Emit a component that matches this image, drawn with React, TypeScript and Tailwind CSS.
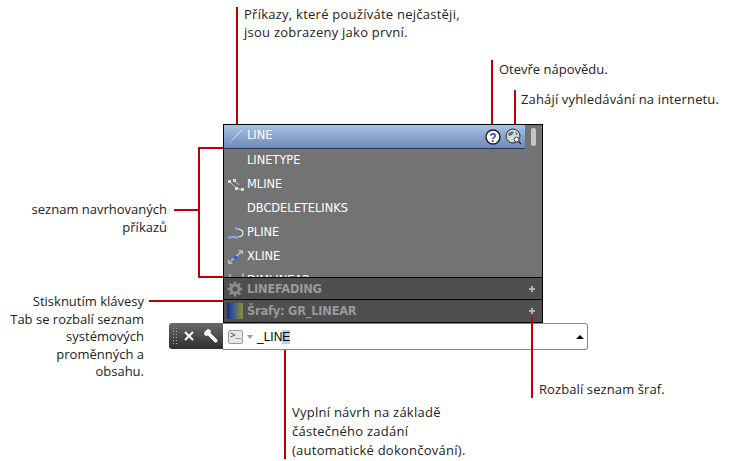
import { ReactNode } from "react";

const ANNOTATION_FONT = "font-['Open_Sans',sans-serif] text-[13px] text-[#222]";

function Row({ icon, label, active }: { icon?: ReactNode; label: string; active?: boolean }) {
  return (
    <div
      className={
        "flex h-[24px] shrink-0 items-center " +
        (active ? "border-b border-[#23345f] bg-gradient-to-b from-[#a9c1e4] to-[#6f8ab5] pb-[1px]" : "pb-[1px]")
      }
    >
      <div className="flex w-[23px] shrink-0 items-center justify-center">{icon}</div>
      <span className="text-[11.4px] text-white">{label}</span>
    </div>
  );
}

function LineIcon() {
  return (
    <svg width="18" height="16" viewBox="0 0 18 16">
      <path d="M3 14 L15 2" stroke="#dfe4ec" strokeWidth="1" fill="none" />
      <rect x="2" y="12" width="3" height="3" fill="#7fa8e8" />
    </svg>
  );
}

function MlineIcon() {
  return (
    <svg width="18" height="14" viewBox="0 0 18 14">
      <path d="M2 3 L9 10 L16 12 M7 2 L12 7" stroke="#c8c8c8" strokeWidth="1" fill="none" />
      <rect x="1" y="2" width="3" height="3" fill="#ddd" />
      <rect x="6" y="1" width="3" height="3" fill="#ddd" />
      <rect x="8" y="9" width="3" height="3" fill="#ddd" />
      <rect x="14" y="10" width="3" height="3" fill="#ddd" />
    </svg>
  );
}

function PlineIcon() {
  return (
    <svg width="18" height="16" viewBox="0 0 18 16">
      <path d="M2 12 H10 C18 12 18 4 10 4" stroke="#e4e6ea" strokeWidth="1.2" fill="none" />
      <rect x="8" y="2" width="3" height="3" fill="#6f9ff0" />
      <rect x="1" y="11" width="3" height="3" fill="#6f9ff0" />
      <rect x="8" y="11" width="3" height="3" fill="#6f9ff0" />
    </svg>
  );
}

function XlineIcon() {
  return (
    <svg width="18" height="16" viewBox="0 0 18 16">
      <path d="M4 12 L15 2" stroke="#c8c8c8" strokeWidth="1.2" fill="none" />
      <path d="M1 10 L6 15 L1 15 Z" fill="#b8b8b8" />
      <path d="M11 1 L16 1 L16 6 Z" fill="#b8b8b8" />
      <rect x="7" y="7" width="3" height="3" fill="#2a5fd0" />
    </svg>
  );
}

function DimLinearIcon() {
  return (
    <svg width="18" height="16" viewBox="0 0 18 16">
      <path d="M3 1 V15 M16 0 V15" stroke="#d8dde6" strokeWidth="1" fill="none" />
      <rect x="2" y="7" width="3" height="3" fill="#6f9ff0" />
      <rect x="13" y="7" width="3" height="3" fill="#6f9ff0" />
    </svg>
  );
}

function HelpIcon() {
  return (
    <svg width="16" height="16" viewBox="0 0 16 16">
      <circle cx="8" cy="8" r="7" fill="#fff" stroke="#1c1c1c" strokeWidth="1.4" />
      <text x="8" y="12.500" textAnchor="middle" fontSize="12" fontWeight="700" fill="#1f4fa8" fontFamily="Liberation Sans, sans-serif">
        ?
      </text>
    </svg>
  );
}

function WebSearchIcon() {
  return (
    <svg width="17" height="17" viewBox="0 0 17 17">
      <circle cx="8" cy="8" r="7" fill="#cfdcdc" stroke="#2a2a2a" strokeWidth="1" />
      <path d="M3 6 C5 3 8 3 9 4 L7 7 L4 8 Z M10 3 L13 6 L11 7 Z" fill="#5f6f70" />
      <circle cx="11.500" cy="11.500" r="2.400" fill="#fff" stroke="#444" strokeWidth="1" />
      <path d="M13.500 13.500 L16 16" stroke="#222" strokeWidth="1.400" />
    </svg>
  );
}

function GearIcon() {
  return (
    <svg width="16" height="16" viewBox="0 0 16 16">
      <circle cx="8" cy="8" r="4" fill="none" stroke="#8c8c8c" strokeWidth="3" />
      <path d="M8 0.500 V3 M8 13 V15.500 M0.500 8 H3 M13 8 H15.500 M2.700 2.700 L4.500 4.500 M11.500 11.500 L13.300 13.300 M13.300 2.700 L11.500 4.500 M4.500 11.500 L2.700 13.300" stroke="#8c8c8c" strokeWidth="2.400" />
    </svg>
  );
}

function Plus() {
  return (
    <svg width="8" height="8" viewBox="0 0 8 8" className="mr-[6px] ml-auto">
      <path d="M4 1 V7 M1 4 H7" stroke="#b0b0b0" strokeWidth="2" />
    </svg>
  );
}

function CategoryRow({ icon, label, tall }: { icon: ReactNode; label: string; tall?: boolean }) {
  return (
    <div
      className={
        "flex items-center border-t border-black bg-[#4f4f4f] pl-[3px] " + (tall ? "h-[23px]" : "h-[22px]")
      }
    >
      <div className="flex w-[16px] justify-center">{icon}</div>
      <span className="mt-[2px] ml-[4px] text-[11.4px] font-bold tracking-[-0.2px] text-[#9a9a9a]">{label}</span>
      <Plus />
    </div>
  );
}

function Suggestions() {
  return (
    <div className="w-[320px] border border-black font-['DejaVu_Sans',sans-serif]">
      <div className="flex h-[152px] bg-[#737373]">
        <div className="flex min-w-0 flex-1 flex-col overflow-hidden">
          <Row active icon={<LineIcon />} label="LINE" />
          <Row label="LINETYPE" />
          <Row icon={<MlineIcon />} label="MLINE" />
          <Row label="DBCDELETELINKS" />
          <Row icon={<PlineIcon />} label="PLINE" />
          <Row icon={<XlineIcon />} label="XLINE" />
          <Row icon={<DimLinearIcon />} label="DIMLINEAR" />
        </div>
        <div className="w-[17px] shrink-0 pt-[3px] pl-[6px]">
          <div className="h-[18px] w-[5px] rounded-[2px] bg-[#c4c4c4]" />
        </div>
      </div>
      <CategoryRow icon={<GearIcon />} label="LINEFADING" />
      <CategoryRow
        tall
        icon={<div className="h-[16px] w-[16px] bg-gradient-to-r from-[#1c1f9c] to-[#8f8f2c]" />}
        label="Šrafy: GR_LINEAR"
      />
    </div>
  );
}

function CommandLine() {
  return (
    <div className="flex h-[27px] w-[419px]">
      <div className="mb-px flex w-[54px] items-center rounded-l-[3px] bg-gradient-to-b from-[#6a6a6a] to-[#2f2f2f] pl-[3px]">
        <div className="h-[18px] w-[6px] bg-[radial-gradient(#aaa_1px,transparent_1px)] bg-[length:3px_3px]" />
        <svg width="10" height="10" viewBox="0 0 10 10" className="ml-[6px]">
          <path d="M1 1 L9 9 M9 1 L1 9" stroke="#fff" strokeWidth="2" />
        </svg>
        <svg width="16" height="16" viewBox="0 0 16 16" className="ml-[9px]">
          <path
            d="M1 4 L4 1 C7 0 9 2 8 5 L15 12 C15 14 14 15 12 15 L5 8 C2 9 0 7 1 4 Z"
            fill="#f2f2f2"
            stroke="#333"
            strokeWidth="0.6"
          />
        </svg>
      </div>
      <div className="flex flex-1 items-center rounded-r-[3px] border border-l-0 border-[#888] bg-white pl-[5px]">
        <div className="flex h-[14px] w-[15px] items-center justify-center rounded-[2px] border border-[#999] bg-[#e4e6ea] font-['Liberation_Mono',monospace] text-[9px] leading-none text-[#333]">
          &gt;_
        </div>
        <div className="mx-[4px] h-0 w-0 border-x-[3px] border-t-[4px] border-x-transparent border-t-[#999]" />
        <span className="mt-[1px] font-['Liberation_Sans',sans-serif] text-[12px] text-black">
          _LIN<span className="bg-[#a8d4fb]">E</span>
        </span>
        <div className="mr-[3px] ml-auto h-0 w-0 border-x-[4px] border-b-[4px] border-x-transparent border-b-black" />
      </div>
    </div>
  );
}

export default function App() {
  return (
    <div className="relative h-[461px] w-[731px] overflow-hidden bg-white">
      {/* diagram: the widget stays in flow, callouts sit over it */}
      <div className="absolute top-[124px] left-[223px]">
        <Suggestions />
      </div>
      <div className="absolute top-[323px] left-[169px]">
        <CommandLine />
      </div>

      {/* callout lines */}
      <div className="absolute top-[7px] left-[236px] h-[117px] w-[2px] bg-[#c00000]" />
      <div className="absolute top-[60px] left-[491px] h-[64px] w-[2px] bg-[#c00000]" />
      <div className="absolute top-[90px] left-[514px] h-[34px] w-[2px] bg-[#c00000]" />
      <div className="absolute top-[147px] left-[198px] h-[131px] w-[25px] border-y-2 border-l-2 border-[#c00000]" />
      <div className="absolute top-[209px] left-[174px] h-[2px] w-[25px] bg-[#c00000]" />
      <div className="absolute top-[300px] left-[149px] h-[2px] w-[74px] bg-[#c00000]" />
      <div className="absolute top-[318px] left-[531px] h-[80px] w-[2px] bg-[#c00000]" />
      <div className="absolute top-[350px] left-[284px] h-[109px] w-[2px] bg-[#c00000]" />

      {/* callout text */}
      <div className={"absolute top-[5px] left-[244px] leading-[18px] tracking-[0.25px] " + ANNOTATION_FONT}>
        Příkazy, které používáte nejčastěji,
        <br />
        jsou zobrazeny jako první.
      </div>
      <div className={"absolute top-[60px] left-[499px] leading-[19px] " + ANNOTATION_FONT}>Otevře nápovědu.</div>
      <div className={"absolute top-[90px] left-[521px] leading-[19px] tracking-[0.15px] " + ANNOTATION_FONT}>
        Zahájí vyhledávání na internetu.
      </div>
      <div className={"absolute top-[200px] right-[564px] text-right leading-[18px] " + ANNOTATION_FONT}>
        seznam navrhovaných
        <br />
        příkazů
      </div>
      <div className={"absolute top-[293px] right-[587px] text-right leading-[17.5px] " + ANNOTATION_FONT}>
        Stisknutím klávesy
        <br />
        Tab se rozbalí seznam
        <br />
        systémových
        <br />
        proměnných a
        <br />
        obsahu.
      </div>
      <div className={"absolute top-[380px] left-[539px] leading-[19px] tracking-[0.1px] " + ANNOTATION_FONT}>
        Rozbalí seznam šraf.
      </div>
      <div className={"absolute top-[403px] left-[292px] leading-[19px] tracking-[0.25px] " + ANNOTATION_FONT}>
        Vyplní návrh na základě
        <br />
        částečného zadání
        <br />
        (automatické dokončování).
      </div>

      {/* help and web search buttons on the active row */}
      <div className="absolute top-[128px] left-[485px] flex items-center gap-[4px]">
        <HelpIcon />
        <WebSearchIcon />
      </div>
    </div>
  );
}
